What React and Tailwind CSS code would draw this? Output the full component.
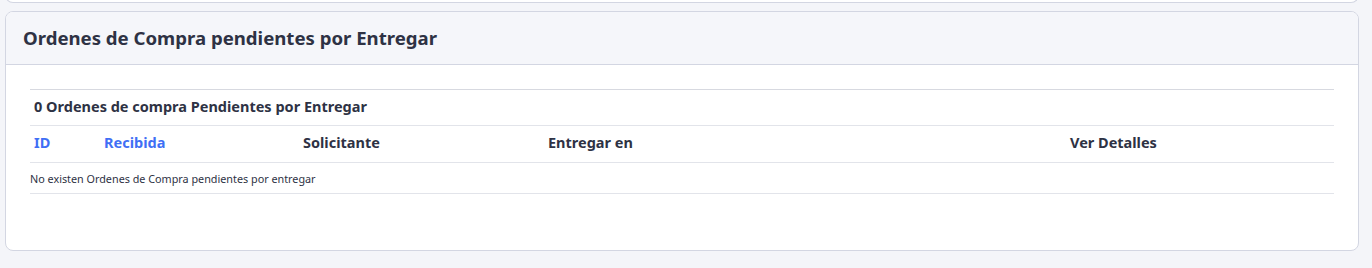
import React from "react";

export default function App() {
  return (
    <div className="min-h-[268px] bg-[#f4f5f9] pl-[5px] pr-[13px] pb-[17px] text-[#2e3244]">
      <div className="flex flex-col gap-[8px] [font-family:'Noto_Sans',sans-serif]">
        <div className="-mt-[20px] h-[23px] rounded-b-[8px] border border-t-0 border-[#d3d6e2] bg-white" />
        <div className="rounded-[8px] border border-[#d3d6e2] bg-white overflow-hidden">
          <div className="flex h-[53px] items-center border-b border-[#d3d6e2] bg-[#f5f6fa] px-[17px]">
            <h2 className="text-[18.6px] font-bold text-[#2e3244]">Ordenes de Compra pendientes por Entregar</h2>
          </div>
          <div className="px-[24px] pt-[24px] pb-[56px]">
            <table className="w-full border-collapse text-left">
              <thead>
                <tr className="border-t border-[#d7d9e0]">
                  <th colSpan={5} className="h-[36px] px-[4px] pb-[1px] text-[14.5px] font-bold">0 Ordenes de compra Pendientes por Entregar</th>
                </tr>
                <tr className="border-t border-[#e2e4ea] text-[14.5px] font-bold">
                  <th className="h-[37px] w-[70px] px-[4px] pb-[3px] text-[#3f6ff5]">ID</th>
                  <th className="w-[199px] px-[4px] pb-[3px] text-[#3f6ff5]">Recibida</th>
                  <th className="w-[245px] px-[4px] pb-[3px]">Solicitante</th>
                  <th className="w-[522px] px-[4px] pb-[3px]">Entregar en</th>
                  <th className="px-[4px] pb-[3px]">Ver Detalles</th>
                </tr>
              </thead>
              <tbody>
                <tr className="border-y border-[#e2e4ea]">
                  <td colSpan={5} className="h-[31px] pt-[3px] text-[10.8px]">No existen Ordenes de Compra pendientes por entregar</td>
                </tr>
              </tbody>
            </table>
          </div>
        </div>
      </div>
    </div>
  );
}
